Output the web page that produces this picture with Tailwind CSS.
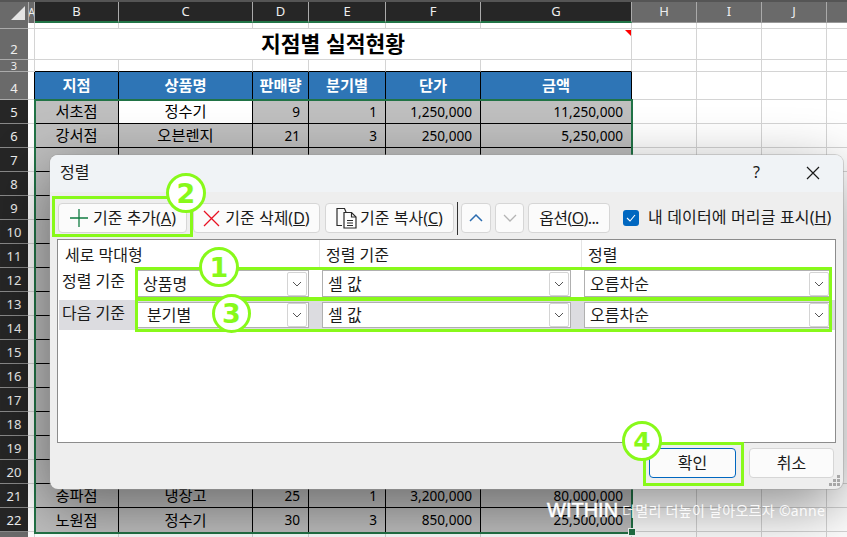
<!DOCTYPE html>
<html lang="ko">
<head>
<meta charset="utf-8">
<script src="https://cdn.jsdelivr.net/npm/@tailwindcss/browser@4"></script>
</head>
<body class="m-0 bg-white overflow-hidden">
<div class="relative w-[847px] h-[537px] overflow-hidden bg-white text-[15.3px] text-black font-['Noto_Sans','Noto_Sans_CJK_KR',sans-serif]">

<!-- sheet -->
<div class="grid grid-cols-[28px_7px_84px_134px_56px_77px_95px_151px_65px_65px_65px_20px] grid-rows-[23px_6px_31px_12px_28px_repeat(18,24px)_5px] [&>div]:grid [&>div]:grid-cols-subgrid [&>div]:col-span-full [&>div>div]:flex [&>div>div]:items-center [&>div>div]:justify-center [&>div>div]:min-w-0 [&>div>div]:overflow-hidden [&>div>div]:whitespace-nowrap">
  <!-- column headers -->
  <div class="border-t-2 border-[#555] text-[13px] text-[#eee]">
    <div class="bg-[#6a6a6a] relative"><svg class="absolute left-[10px] top-[3px]" width="16" height="16" viewBox="0 0 16 16"><path d="M15 1V15H1Z" fill="#e4e4e4"/></svg></div>
    <div class="bg-[#6a6a6a] border-x border-[#aaa] text-[12px]">A</div>
    <div class="bg-[#262626] border-r border-[#aaa] border-b-2 !border-b-[#217346]">B</div>
    <div class="bg-[#262626] border-r border-[#aaa] border-b-2 !border-b-[#217346]">C</div>
    <div class="bg-[#262626] border-r border-[#aaa] border-b-2 !border-b-[#217346]">D</div>
    <div class="bg-[#262626] border-r border-[#aaa] border-b-2 !border-b-[#217346]">E</div>
    <div class="bg-[#262626] border-r border-[#aaa] border-b-2 !border-b-[#217346]">F</div>
    <div class="bg-[#262626] border-r border-[#aaa] border-b-2 !border-b-[#217346]">G</div>
    <div class="bg-[#6a6a6a] border-r border-[#aaa] border-b border-b-[#999]">H</div>
    <div class="bg-[#6a6a6a] border-r border-[#aaa] border-b border-b-[#999]">I</div>
    <div class="bg-[#6a6a6a] border-r border-[#aaa] border-b border-b-[#999]">J</div>
    <div class="bg-[#6a6a6a] border-b border-b-[#999]"></div>
  </div>
  <!-- row 1 -->
  <div>
    <div class="bg-[#6a6a6a] border-b border-[#aaa]"></div>
    <div class="border-r border-b border-[#d4d4d4]"></div>
    <div class="border-r border-b border-[#d4d4d4]"></div><div class="border-r border-b border-[#d4d4d4]"></div><div class="border-r border-b border-[#d4d4d4]"></div><div class="border-r border-b border-[#d4d4d4]"></div><div class="border-r border-b border-[#d4d4d4]"></div><div class="border-r border-b border-[#d4d4d4]"></div><div class="border-r border-b border-[#d4d4d4]"></div><div class="border-r border-b border-[#d4d4d4]"></div><div class="border-r border-b border-[#d4d4d4]"></div><div class="border-b border-[#d4d4d4]"></div>
  </div>
  <!-- row 2 -->
  <div class="relative">
    <div class="bg-[#6a6a6a] border-b border-[#aaa] text-[13px] text-[#eee] !items-end">2</div>
    <div class="border-r border-b border-[#d4d4d4]"></div>
    <div class="col-span-6 border-r border-b border-[#d4d4d4] text-[21.5px] font-bold pt-[1px]">지점별 실적현황</div>
    <div class="border-r border-b border-[#d4d4d4]"></div><div class="border-r border-b border-[#d4d4d4]"></div><div class="border-r border-b border-[#d4d4d4]"></div><div class="border-b border-[#d4d4d4]"></div>
    <svg class="absolute left-[625px] top-[1px]" width="6" height="6" viewBox="0 0 6 6"><path d="M0 0H6V6Z" fill="#ff0000"/></svg>
  </div>
  <!-- row 3 -->
  <div>
    <div class="bg-[#6a6a6a] border-b border-[#aaa] text-[11px] text-[#eee] leading-none">3</div>
    <div class="border-r border-b border-[#d4d4d4]"></div>
    <div class="border-r border-b border-b-black border-r-[#d4d4d4]"></div><div class="border-r border-b border-b-black border-r-[#d4d4d4]"></div><div class="border-r border-b border-b-black border-r-[#d4d4d4]"></div><div class="border-r border-b border-b-black border-r-[#d4d4d4]"></div><div class="border-r border-b border-b-black border-r-[#d4d4d4]"></div><div class="border-r border-b border-b-black border-r-[#d4d4d4]"></div><div class="border-r border-b border-[#d4d4d4]"></div><div class="border-r border-b border-[#d4d4d4]"></div><div class="border-r border-b border-[#d4d4d4]"></div><div class="border-b border-[#d4d4d4]"></div>
  </div>
  <!-- row 4 -->
  <div class="font-bold">
    <div class="bg-[#6a6a6a] border-b border-[#aaa] text-[13px] font-normal text-[#eee] pt-[7px]">4</div>
    <div class="border-r border-b border-r-black border-b-[#d4d4d4]"></div>
    <div class="bg-[#2e75b6] border-r border-black text-white pb-[2px]">지점</div>
    <div class="bg-[#2e75b6] border-r border-black text-white pb-[2px]">상품명</div>
    <div class="bg-[#2e75b6] border-r border-black text-white pb-[2px]">판매량</div>
    <div class="bg-[#2e75b6] border-r border-black text-white pb-[2px]">분기별</div>
    <div class="bg-[#2e75b6] border-r border-black text-white pb-[2px]">단가</div>
    <div class="bg-[#2e75b6] border-r border-black text-white pb-[2px]">금액</div>
    <div class="border-r border-b border-[#d4d4d4]"></div><div class="border-r border-b border-[#d4d4d4]"></div><div class="border-r border-b border-[#d4d4d4]"></div><div class="border-b border-[#d4d4d4]"></div>
  </div>
  <!-- row 5 -->
  <div>
    <div class="bg-[#262626] border-b border-[#888] text-[13px] text-[#eee] pt-[2px]">5</div>
    <div class="border-b border-[#d4d4d4]"></div>
    <div class="bg-[#bfbfbf] border-r border-b border-black">서초점</div>
    <div class="bg-white border-r border-b border-black">정수기</div>
    <div class="bg-[#bfbfbf] border-r border-b border-black !justify-end pr-[8px] text-[13.6px] pt-[1px]">9</div>
    <div class="bg-[#bfbfbf] border-r border-b border-black !justify-end pr-[8px] text-[13.6px] pt-[1px]">1</div>
    <div class="bg-[#bfbfbf] border-r border-b border-black !justify-end pr-[8px] text-[13.6px] pt-[1px]">1,250,000</div>
    <div class="bg-[#bfbfbf] border-r border-b border-black !justify-end pr-[8px] text-[13.6px] pt-[1px]">11,250,000</div>
    <div class="border-r border-b border-[#d4d4d4]"></div><div class="border-r border-b border-[#d4d4d4]"></div><div class="border-r border-b border-[#d4d4d4]"></div><div class="border-b border-[#d4d4d4]"></div>
  </div>
  <!-- row 6 -->
  <div>
    <div class="bg-[#262626] border-b border-[#888] text-[13px] text-[#eee] pt-[2px]">6</div>
    <div class="border-b border-[#d4d4d4]"></div>
    <div class="bg-[#bfbfbf] border-r border-b border-black">강서점</div>
    <div class="bg-[#bfbfbf] border-r border-b border-black">오븐렌지</div>
    <div class="bg-[#bfbfbf] border-r border-b border-black !justify-end pr-[8px] text-[13.6px] pt-[1px]">21</div>
    <div class="bg-[#bfbfbf] border-r border-b border-black !justify-end pr-[8px] text-[13.6px] pt-[1px]">3</div>
    <div class="bg-[#bfbfbf] border-r border-b border-black !justify-end pr-[8px] text-[13.6px] pt-[1px]">250,000</div>
    <div class="bg-[#bfbfbf] border-r border-b border-black !justify-end pr-[8px] text-[13.6px] pt-[1px]">5,250,000</div>
    <div class="border-r border-b border-[#d4d4d4]"></div><div class="border-r border-b border-[#d4d4d4]"></div><div class="border-r border-b border-[#d4d4d4]"></div><div class="border-b border-[#d4d4d4]"></div>
  </div>
  <!-- row 7 -->
  <div>
    <div class="bg-[#262626] border-b border-[#888] text-[13px] text-[#eee] pt-[2px]">7</div>
    <div class="border-b border-[#d4d4d4]"></div>
    <div class="bg-[#bfbfbf] border-r border-b border-black"></div><div class="bg-[#bfbfbf] border-r border-b border-black"></div><div class="bg-[#bfbfbf] border-r border-b border-black"></div><div class="bg-[#bfbfbf] border-r border-b border-black"></div><div class="bg-[#bfbfbf] border-r border-b border-black"></div><div class="bg-[#bfbfbf] border-r border-b border-black"></div>
    <div class="border-r border-b border-[#d4d4d4]"></div><div class="border-r border-b border-[#d4d4d4]"></div><div class="border-r border-b border-[#d4d4d4]"></div><div class="border-b border-[#d4d4d4]"></div>
  </div>
  <!-- rows 8-19: only the left and right edges show beside the dialog -->
  <div><div class="bg-[#262626] border-b border-[#888] text-[13px] text-[#eee] pt-[2px]">8</div><div class="border-b border-[#d4d4d4]"></div><div class="bg-[#bfbfbf] col-span-2 border-b border-black"></div><div class="col-span-8"></div></div>
  <div><div class="bg-[#262626] border-b border-[#888] text-[13px] text-[#eee] pt-[2px]">9</div><div class="border-b border-[#d4d4d4]"></div><div class="bg-[#bfbfbf] col-span-2 border-b border-black"></div><div class="col-span-8"></div></div>
  <div><div class="bg-[#262626] border-b border-[#888] text-[13px] text-[#eee] pt-[2px]">10</div><div class="border-b border-[#d4d4d4]"></div><div class="bg-[#bfbfbf] col-span-2 border-b border-black"></div><div class="col-span-8"></div></div>
  <div><div class="bg-[#262626] border-b border-[#888] text-[13px] text-[#eee] pt-[2px]">11</div><div class="border-b border-[#d4d4d4]"></div><div class="bg-[#bfbfbf] col-span-2 border-b border-black"></div><div class="col-span-8"></div></div>
  <div><div class="bg-[#262626] border-b border-[#888] text-[13px] text-[#eee] pt-[2px]">12</div><div class="border-b border-[#d4d4d4]"></div><div class="bg-[#bfbfbf] col-span-2 border-b border-black"></div><div class="col-span-8"></div></div>
  <div><div class="bg-[#262626] border-b border-[#888] text-[13px] text-[#eee] pt-[2px]">13</div><div class="border-b border-[#d4d4d4]"></div><div class="bg-[#bfbfbf] col-span-2 border-b border-black"></div><div class="col-span-8"></div></div>
  <div><div class="bg-[#262626] border-b border-[#888] text-[13px] text-[#eee] pt-[2px]">14</div><div class="border-b border-[#d4d4d4]"></div><div class="bg-[#bfbfbf] col-span-2 border-b border-black"></div><div class="col-span-8"></div></div>
  <div><div class="bg-[#262626] border-b border-[#888] text-[13px] text-[#eee] pt-[2px]">15</div><div class="border-b border-[#d4d4d4]"></div><div class="bg-[#bfbfbf] col-span-2 border-b border-black"></div><div class="col-span-8"></div></div>
  <div><div class="bg-[#262626] border-b border-[#888] text-[13px] text-[#eee] pt-[2px]">16</div><div class="border-b border-[#d4d4d4]"></div><div class="bg-[#bfbfbf] col-span-2 border-b border-black"></div><div class="col-span-8"></div></div>
  <div><div class="bg-[#262626] border-b border-[#888] text-[13px] text-[#eee] pt-[2px]">17</div><div class="border-b border-[#d4d4d4]"></div><div class="bg-[#bfbfbf] col-span-2 border-b border-black"></div><div class="col-span-8"></div></div>
  <div><div class="bg-[#262626] border-b border-[#888] text-[13px] text-[#eee] pt-[2px]">18</div><div class="border-b border-[#d4d4d4]"></div><div class="bg-[#bfbfbf] col-span-2 border-b border-black"></div><div class="col-span-8"></div></div>
  <div><div class="bg-[#262626] border-b border-[#888] text-[13px] text-[#eee] pt-[2px]">19</div><div class="border-b border-[#d4d4d4]"></div><div class="bg-[#bfbfbf] col-span-2 border-b border-black"></div><div class="col-span-8"></div></div>
  <!-- row 20 -->
  <div>
    <div class="bg-[#262626] border-b border-[#888] text-[13px] text-[#eee] pt-[2px]">20</div>
    <div class="border-b border-[#d4d4d4]"></div>
    <div class="bg-[#bfbfbf] border-r border-b border-black"></div><div class="bg-[#bfbfbf] border-r border-b border-black"></div><div class="bg-[#bfbfbf] border-r border-b border-black"></div><div class="bg-[#bfbfbf] border-r border-b border-black"></div><div class="bg-[#bfbfbf] border-r border-b border-black"></div><div class="bg-[#bfbfbf] border-r border-b border-black"></div>
    <div class="border-r border-b border-[#d4d4d4]"></div><div class="border-r border-b border-[#d4d4d4]"></div><div class="border-r border-b border-[#d4d4d4]"></div><div class="border-b border-[#d4d4d4]"></div>
  </div>
  <!-- row 21 -->
  <div>
    <div class="bg-[#262626] border-b border-[#888] text-[13px] text-[#eee] pt-[2px]">21</div>
    <div class="border-b border-[#d4d4d4]"></div>
    <div class="bg-[#bfbfbf] border-r border-b border-black">송파점</div>
    <div class="bg-[#bfbfbf] border-r border-b border-black">냉장고</div>
    <div class="bg-[#bfbfbf] border-r border-b border-black !justify-end pr-[8px] text-[13.6px] pt-[1px]">25</div>
    <div class="bg-[#bfbfbf] border-r border-b border-black !justify-end pr-[8px] text-[13.6px] pt-[1px]">1</div>
    <div class="bg-[#bfbfbf] border-r border-b border-black !justify-end pr-[8px] text-[13.6px] pt-[1px]">3,200,000</div>
    <div class="bg-[#bfbfbf] border-r border-b border-black !justify-end pr-[8px] text-[13.6px] pt-[1px]">80,000,000</div>
    <div class="border-r border-b border-[#d4d4d4]"></div><div class="border-r border-b border-[#d4d4d4]"></div><div class="border-r border-b border-[#d4d4d4]"></div><div class="border-b border-[#d4d4d4]"></div>
  </div>
  <!-- row 22 -->
  <div>
    <div class="bg-[#262626] border-b border-[#888] text-[13px] text-[#eee] pt-[2px]">22</div>
    <div class="border-b border-[#d4d4d4]"></div>
    <div class="bg-[#bfbfbf] border-r border-black">노원점</div>
    <div class="bg-[#bfbfbf] border-r border-black">정수기</div>
    <div class="bg-[#bfbfbf] border-r border-black !justify-end pr-[8px] text-[13.6px] pt-[1px]">30</div>
    <div class="bg-[#bfbfbf] border-r border-black !justify-end pr-[8px] text-[13.6px] pt-[1px]">3</div>
    <div class="bg-[#bfbfbf] border-r border-black !justify-end pr-[8px] text-[13.6px] pt-[1px]">850,000</div>
    <div class="bg-[#bfbfbf] border-r border-black !justify-end pr-[8px] text-[13.6px] pt-[1px]">25,500,000</div>
    <div class="border-r border-b border-[#d4d4d4]"></div><div class="border-r border-b border-[#d4d4d4]"></div><div class="border-r border-b border-[#d4d4d4]"></div><div class="border-b border-[#d4d4d4]"></div>
  </div>
  <!-- row 23 sliver -->
  <div>
    <div class="bg-[#6a6a6a]"></div><div class="border-r border-[#d4d4d4]"></div><div class="border-r border-[#d4d4d4]"></div><div class="border-r border-[#d4d4d4]"></div><div class="border-r border-[#d4d4d4]"></div><div class="border-r border-[#d4d4d4]"></div><div class="border-r border-[#d4d4d4]"></div><div class="border-r border-[#d4d4d4]"></div><div class="border-r border-[#d4d4d4]"></div><div class="border-r border-[#d4d4d4]"></div><div class="border-r border-[#d4d4d4]"></div><div></div>
  </div>
</div>

<!-- selection outline -->
<div class="absolute left-[34px] top-[99px] w-[599px] h-[435px] border-2 border-[#217346]"></div>
<div class="absolute left-[628px] top-[528px] w-[6px] h-[6px] bg-[#217346] border border-white box-content"></div>

<!-- sort dialog -->
<div class="absolute left-[50px] top-[155px] w-[793px] h-[334px] rounded-[8px] bg-[#eeeeee] ring-1 ring-[#999]/40 shadow-[-4px_18px_60px_rgba(0,0,0,0.45)] flex flex-col text-[16px] text-[#1a1a1a] overflow-hidden">
  <div class="h-[37px] shrink-0 bg-[#f0f3f6] flex items-center pl-[10px] pr-[23px]">
    <span class="pb-[3px]">정렬</span>
    <span class="ml-auto mr-[46px] pb-[3px]">?</span>
    <svg width="14" height="14" viewBox="0 0 14 14" fill="none" stroke="#1a1a1a" stroke-width="1.2" class="-mt-[2px]"><path d="M1 1L13 13M13 1L1 13"/></svg>
  </div>
  <div class="h-[47px] shrink-0 flex items-start pt-[11px] pl-[8px] whitespace-nowrap">
    <button class="w-[129px] h-[30px] bg-[#fbfbfb] border border-[#d6d6d6] rounded-[4px] flex items-center justify-center gap-[4px]">
      <svg width="20" height="20" viewBox="0 0 20 20" fill="none" stroke="#107c41" stroke-width="1.3"><path d="M10 1V19M1 10H19"/></svg>
      <span>기준 추가(<u>A</u>)</span>
    </button>
    <button class="ml-[6px] w-[127px] h-[30px] bg-[#fbfbfb] border border-[#d6d6d6] rounded-[4px] flex items-center justify-center gap-[5px]">
      <svg width="17" height="17" viewBox="0 0 17 17" fill="none" stroke="#e81123" stroke-width="1.3"><path d="M1 1L16 16M16 1L1 16"/></svg>
      <span>기준 삭제(<u>D</u>)</span>
    </button>
    <button class="ml-[5px] w-[129px] h-[30px] bg-[#fbfbfb] border border-[#d6d6d6] rounded-[4px] flex items-center justify-center gap-[2px]">
      <svg width="22" height="22" viewBox="0 0 22 22" fill="none" stroke="#2a2a2a" stroke-width="1.2"><path d="M6 18.5H1V1.5H8.5L10 5"/><path d="M8 5.5H15.5L20 10V21H8Z" fill="#fff"/><path d="M15.5 5.5V10H20M11 13.5H17M11 16H17M11 18.5H17"/></svg>
      <span>기준 복사(<u>C</u>)</span>
    </button>
    <span class="ml-[3px] -mt-[1px] w-[1px] h-[33px] bg-[#333]"></span>
    <button class="ml-[3px] w-[30px] h-[30px] bg-[#fbfbfb] border border-[#d6d6d6] rounded-[4px] flex items-center justify-center">
      <svg width="14" height="10" viewBox="0 0 14 10" fill="none" stroke="#2b6cb0" stroke-width="1.5"><path d="M1 8L7 2L13 8"/></svg>
    </button>
    <button class="ml-[4px] w-[29px] h-[30px] bg-[#fbfbfb] border border-[#d6d6d6] rounded-[4px] flex items-center justify-center">
      <svg width="14" height="10" viewBox="0 0 14 10" fill="none" stroke="#b4b4b4" stroke-width="1.3"><path d="M1 2L7 8L13 2"/></svg>
    </button>
    <button class="ml-[4px] w-[82px] h-[30px] bg-[#fbfbfb] border border-[#d6d6d6] rounded-[4px] flex items-center justify-center tracking-[-0.6px]">옵션(<u>O</u>)...</button>
    <span class="ml-[13px] mt-[7px] w-[16px] h-[16px] rounded-[3px] bg-[#0067c0] flex items-center justify-center">
      <svg width="10" height="8" viewBox="0 0 10 8" fill="none" stroke="#fff" stroke-width="1.1"><path d="M1 4L4 7L9 1"/></svg>
    </span>
    <span class="ml-[9px] mt-[2px] tracking-[0.15px]">내 데이터에 머리글 표시(<u>H</u>)</span>
  </div>
  <div class="h-[204px] shrink-0 mx-[7px] w-[779px] bg-white border border-[#8c8c8c] flex flex-col">
    <div class="h-[27px] shrink-0 flex items-center">
      <div class="w-[262px] pl-[7px] pt-[2px] h-full flex items-center border-r border-[#e4e4e4]">세로 막대형</div>
      <div class="w-[262px] pl-[6px] pt-[2px] h-full flex items-center border-r border-[#e4e4e4]">정렬 기준</div>
      <div class="pl-[6px] pt-[2px]">정렬</div>
    </div>
    <div class="h-[33px] shrink-0 flex items-center">
      <div class="w-[79px] pl-[4px] pb-[6px] shrink-0 whitespace-nowrap">정렬 기준</div>
      <div class="w-[172px] h-[27px] bg-white border border-[#b0b0b0] flex items-center pl-[5px] shrink-0">상품명<span class="ml-auto mr-[1px] w-[20px] h-[24px] border border-[#d4d4d4] rounded-[2px] flex items-center justify-center"><svg width="10" height="6" viewBox="0 0 10 6" fill="none" stroke="#555" stroke-width="1"><path d="M1 1L5 5L9 1"/></svg></span></div>
      <div class="w-[13px] shrink-0"></div>
      <div class="w-[249px] h-[27px] bg-white border border-[#b0b0b0] flex items-center pl-[5px] shrink-0">셀 값<span class="ml-auto mr-[1px] w-[20px] h-[24px] border border-[#d4d4d4] rounded-[2px] flex items-center justify-center"><svg width="10" height="6" viewBox="0 0 10 6" fill="none" stroke="#555" stroke-width="1"><path d="M1 1L5 5L9 1"/></svg></span></div>
      <div class="w-[13px] shrink-0"></div>
      <div class="w-[247px] h-[27px] bg-white border border-[#b0b0b0] flex items-center pl-[5px] shrink-0">오름차순<span class="ml-auto mr-[1px] w-[20px] h-[24px] border border-[#d4d4d4] rounded-[2px] flex items-center justify-center"><svg width="10" height="6" viewBox="0 0 10 6" fill="none" stroke="#555" stroke-width="1"><path d="M1 1L5 5L9 1"/></svg></span></div>
    </div>
    <div class="h-[30px] shrink-0 ml-[1px] bg-[#dcdce0] flex items-center">
      <div class="w-[78px] pl-[3px] pb-[5px] shrink-0 whitespace-nowrap">다음 기준</div>
      <div class="w-[172px] h-[26px] bg-white border border-[#b0b0b0] flex items-center pl-[9px] shrink-0">분기별<span class="ml-auto mr-[1px] w-[20px] h-[24px] border border-[#d4d4d4] rounded-[2px] flex items-center justify-center"><svg width="10" height="6" viewBox="0 0 10 6" fill="none" stroke="#555" stroke-width="1"><path d="M1 1L5 5L9 1"/></svg></span></div>
      <div class="w-[13px] shrink-0"></div>
      <div class="w-[249px] h-[26px] bg-white border border-[#b0b0b0] flex items-center pl-[5px] shrink-0">셀 값<span class="ml-auto mr-[1px] w-[20px] h-[24px] border border-[#d4d4d4] rounded-[2px] flex items-center justify-center"><svg width="10" height="6" viewBox="0 0 10 6" fill="none" stroke="#555" stroke-width="1"><path d="M1 1L5 5L9 1"/></svg></span></div>
      <div class="w-[13px] shrink-0"></div>
      <div class="w-[247px] h-[26px] bg-white border border-[#b0b0b0] flex items-center pl-[5px] shrink-0">오름차순<span class="ml-auto mr-[1px] w-[20px] h-[24px] border border-[#d4d4d4] rounded-[2px] flex items-center justify-center"><svg width="10" height="6" viewBox="0 0 10 6" fill="none" stroke="#555" stroke-width="1"><path d="M1 1L5 5L9 1"/></svg></span></div>
    </div>
  </div>
  <div class="flex justify-end gap-[13px] pt-[5px] pr-[9px] relative flex-1">
    <button class="w-[87px] h-[30px] bg-[#fbfbfb] border-[1.5px] border-[#0067c0] rounded-[4px] pb-[1px]">확인</button>
    <button class="w-[85px] h-[30px] bg-[#fbfbfb] border border-[#d6d6d6] rounded-[4px] pb-[1px]">취소</button>
    <svg class="absolute right-[2px] bottom-[2px]" width="12" height="12" viewBox="0 0 12 12" fill="#a8a8a8"><rect x="8" y="0" width="3" height="3"/><rect x="4" y="4" width="3" height="3"/><rect x="8" y="4" width="3" height="3"/><rect x="0" y="8" width="3" height="3"/><rect x="4" y="8" width="3" height="3"/><rect x="8" y="8" width="3" height="3"/></svg>
  </div>
</div>

<!-- green callouts -->
<div class="absolute left-[52px] top-[196px] w-[141px] h-[41px] border-[3px] border-[#88f91a]"></div>
<div class="absolute left-[135px] top-[267px] w-[697px] h-[33px] border-[3px] border-[#88f91a]"></div>
<div class="absolute left-[135px] top-[298px] w-[697px] h-[34px] border-[3px] border-[#88f91a]"></div>
<div class="absolute left-[643px] top-[442px] w-[101px] h-[44px] border-[3px] border-[#88f91a]"></div>

<div class="absolute left-[166px] top-[173px] w-[40px] h-[40px] rounded-full bg-white border-[3px] border-[#88f91a] flex items-center justify-center text-[27px] leading-none font-bold font-['DejaVu_Sans',sans-serif] text-[#88f91a]">2</div>
<div class="absolute left-[199px] top-[247px] w-[40px] h-[40px] rounded-full bg-white border-[3px] border-[#88f91a] flex items-center justify-center text-[27px] leading-none font-bold font-['DejaVu_Sans',sans-serif] text-[#88f91a]">1</div>
<div class="absolute left-[212px] top-[294px] w-[39px] h-[39px] rounded-full bg-white border-[3px] border-[#88f91a] flex items-center justify-center text-[27px] leading-none font-bold font-['DejaVu_Sans',sans-serif] text-[#88f91a]">3</div>
<div class="absolute left-[622px] top-[421px] w-[40px] h-[40px] rounded-full bg-white border-[3px] border-[#88f91a] flex items-center justify-center text-[25px] leading-none font-bold font-['DejaVu_Sans',sans-serif] text-[#88f91a]">4</div>

<!-- watermark -->
<div class="absolute left-[547px] top-[496px] flex items-center whitespace-nowrap text-white">
  <span class="text-[20px] leading-[28px] font-['Liberation_Sans',sans-serif] [-webkit-text-stroke:0.5px_#fff]">WITHIN</span>
  <span class="ml-[4px] mt-[1px] text-[14px] tracking-[0.3px] opacity-90">더멀리 더높이 날아오르자 ©anne</span>
</div>
</div>
</body>
</html>
